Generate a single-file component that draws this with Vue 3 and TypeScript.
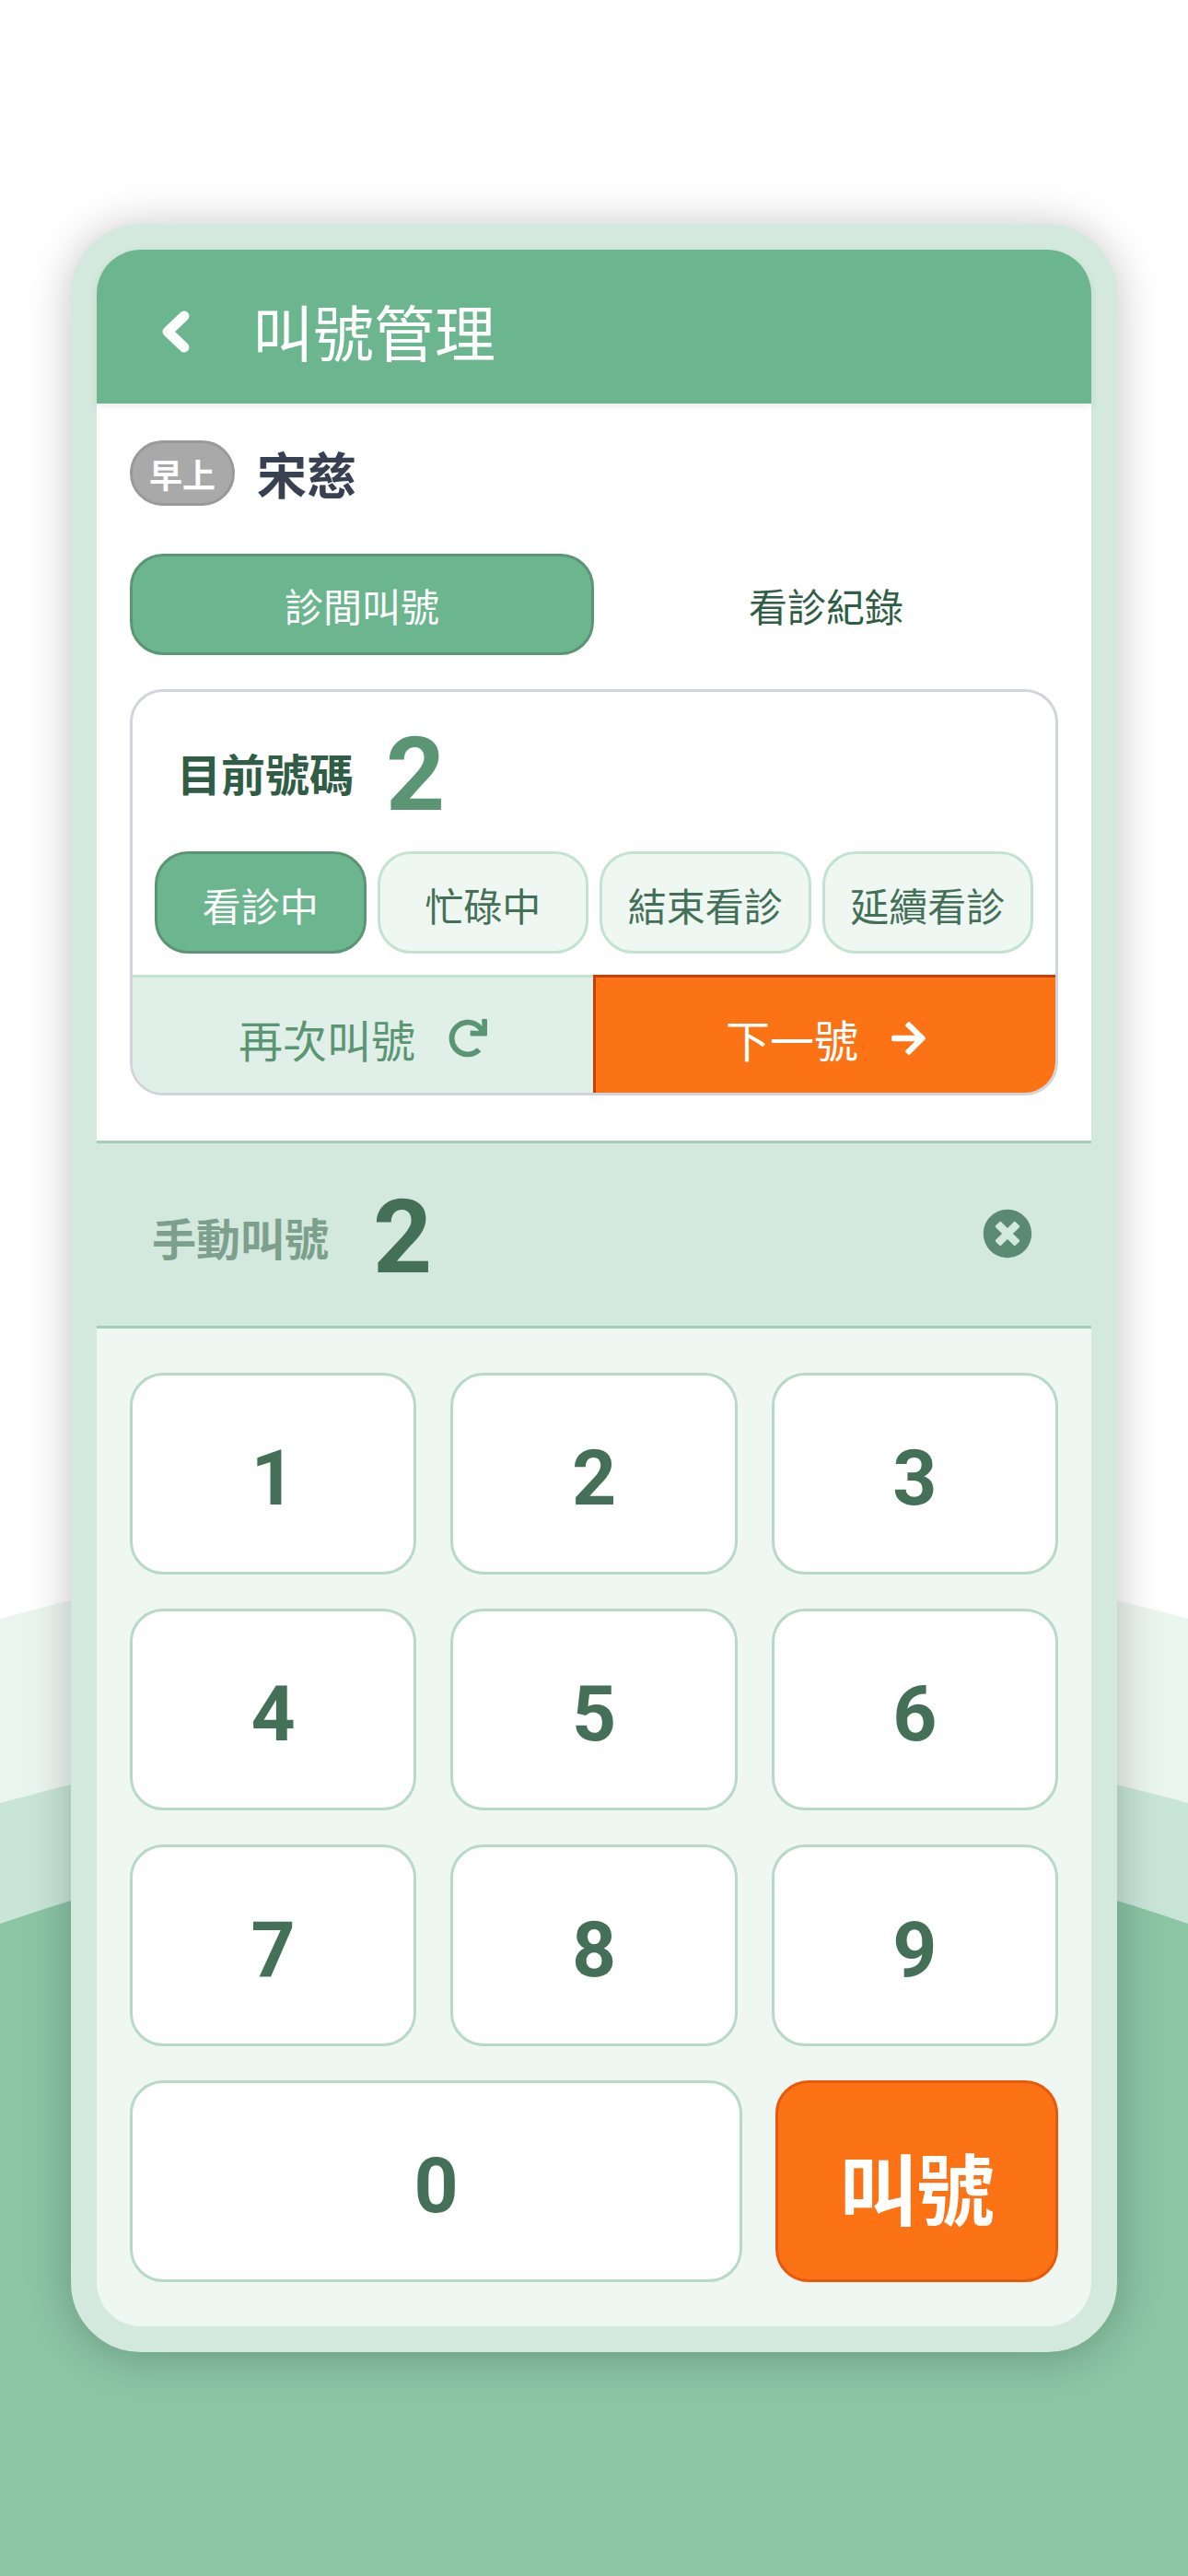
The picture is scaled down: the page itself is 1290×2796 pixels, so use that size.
<script setup lang="ts">
import { computed, ref } from 'vue'

interface Status {
  label: string
  active: boolean
}

const statuses: Status[] = [
  { label: '看診中', active: true },
  { label: '忙碌中', active: false },
  { label: '結束看診', active: false },
  { label: '延續看診', active: false },
]

const digits: string[] = ['1', '2', '3', '4', '5', '6', '7', '8', '9']
const currentNumber = ref<number>(2)
const manualNumber = computed<string>(() => String(currentNumber.value))
</script>

<template>
  <main class="page">
    <svg class="waves" viewBox="0 0 1290 2796" aria-hidden="true">
      <path fill="#ebf5f0" d="M0 1757Q645 1579 1290 1757V2796H0Z" />
      <path fill="#c8e5d8" d="M0 1957Q645 1779 1290 1957V2796H0Z" />
      <path fill="#8ac5a4" d="M0 2088Q645 1865 1290 2088V2796H0Z" />
    </svg>

    <section class="frame">
      <header class="topbar">
        <svg class="back" viewBox="0 0 36 56" aria-hidden="true">
          <path fill="none" stroke="currentColor" stroke-width="11" stroke-linecap="round" stroke-linejoin="round" d="M27 11L9 28L27 45" />
        </svg>
        <h1 class="title">叫號管理</h1>
      </header>

      <div class="content">
        <div class="doctor">
          <span class="badge">早上</span>
          <span class="name">宋慈</span>
        </div>

        <div class="tabs">
          <button class="tab tab-on">診間叫號</button>
          <button class="tab">看診紀錄</button>
        </div>

        <div class="card">
          <div class="now">
            <span class="now-label">目前號碼</span>
            <span class="now-value">{{ currentNumber }}</span>
          </div>
          <div class="statuses">
            <button
              v-for="s in statuses"
              :key="s.label"
              class="status"
              :class="{ 'status-on': s.active }"
            >{{ s.label }}</button>
          </div>
          <div class="actions">
            <button class="action again">
              <span>再次叫號</span>
              <svg class="again-icon" viewBox="0 0 512 512" aria-hidden="true">
                <path fill="currentColor" d="M500.33 0h-47.41a12 12 0 0 0-12 12.57l4 82.76A247.42 247.42 0 0 0 256 8C119.34 8 8.05 119.53 8 256.19 8 393 119.1 504 256 504a247.1 247.1 0 0 0 166.18-63.91 12 12 0 0 0 .48-17.43l-34-34a12 12 0 0 0-16.38-.55A176 176 0 1 1 402.1 157.8l-101.53-4.87a12 12 0 0 0-12.57 12v47.41a12 12 0 0 0 12 12h200.33a12 12 0 0 0 12-12V12a12 12 0 0 0-12-12z" />
              </svg>
            </button>
            <button class="action next">
              <span>下一號</span>
              <svg class="next-icon" viewBox="0 0 448 512" aria-hidden="true">
                <path fill="currentColor" d="M190.5 66.9l22.2-22.2c9.4-9.4 24.6-9.4 33.9 0L441 239c9.4 9.4 9.4 24.6 0 33.9L246.6 467.3c-9.4 9.4-24.6 9.4-33.9 0l-22.2-22.2c-9.5-9.5-9.3-25 .4-34.3L311.4 296H24c-13.3 0-24-10.7-24-24v-32c0-13.3 10.7-24 24-24h287.4L190.9 101.2c-9.8-9.3-10-24.8-.4-34.3z" />
              </svg>
            </button>
          </div>
        </div>
      </div>

      <div class="manual">
        <span class="manual-label">手動叫號</span>
        <span class="manual-value">{{ manualNumber }}</span>
        <svg class="clear" viewBox="0 0 512 512" aria-hidden="true">
          <path fill="currentColor" d="M256 8C119 8 8 119 8 256s111 248 248 248 248-111 248-248S393 8 256 8zm121.6 313.1c4.7 4.7 4.7 12.3 0 17L338 377.6c-4.7 4.7-12.3 4.7-17 0L256 312l-65.1 65.6c-4.7 4.7-12.3 4.7-17 0L134.4 338c-4.7-4.7-4.7-12.3 0-17l65.6-65-65.6-65.1c-4.7-4.7-4.7-12.3 0-17l39.6-39.6c4.7-4.7 12.3-4.7 17 0l65 65.7 65.1-65.6c4.7-4.7 12.3-4.7 17 0l39.6 39.6c4.7 4.7 4.7 12.3 0 17L312 256l65.6 65.1z" />
        </svg>
      </div>

      <div class="keypad">
        <button v-for="d in digits" :key="d" class="key">{{ d }}</button>
        <div class="last-row">
          <button class="key key-zero">0</button>
          <button class="key key-call">叫號</button>
        </div>
      </div>
    </section>
  </main>
</template>

<style scoped>
.page {
  position: relative;
  box-sizing: border-box;
  width: 1290px;
  height: 2796px;
  padding-top: 243px;
  display: flex;
  justify-content: center;
  align-items: flex-start;
  overflow: hidden;
  background: #ffffff;
  font-family: "Noto Sans CJK TC", "Noto Sans", sans-serif;
}

.waves {
  position: absolute;
  inset: 0;
  width: 1290px;
  height: 2796px;
}

.frame {
  position: relative;
  box-sizing: border-box;
  width: 1136px;
  height: 2310px;
  border: 28px solid #d4e9de;
  border-radius: 76px;
  background: #d4e9de;
  box-shadow: 0 3px 48px rgba(0, 0, 0, 0.24);
  display: flex;
  flex-direction: column;
}

button {
  margin: 0;
  padding: 0;
  font-family: inherit;
  cursor: pointer;
}

.topbar {
  position: relative;
  z-index: 1;
  box-sizing: border-box;
  height: 167px;
  padding: 6px 0 0 68px;
  display: flex;
  align-items: center;
  gap: 65px;
  background: #6bb58f;
  color: #ffffff;
  border-radius: 48px 48px 0 0;
  box-shadow: 0 3px 9px rgba(0, 0, 0, 0.08);
}

.back {
  width: 36px;
  height: 56px;
  margin-top: 5px;
}

.title {
  margin: 0;
  font-size: 66px;
  font-weight: 400;
  line-height: 1;
}

.content {
  box-sizing: border-box;
  height: 800px;
  padding: 40px 36px 0;
  background: #ffffff;
}

.doctor {
  height: 71px;
  display: flex;
  align-items: center;
  gap: 24px;
}

.badge {
  box-sizing: border-box;
  width: 114px;
  height: 71px;
  display: flex;
  align-items: center;
  justify-content: center;
  border: 3px solid #999999;
  border-radius: 36px;
  background: #a9a9a9;
  color: #ffffff;
  font-size: 36px;
  font-weight: 700;
}

.name {
  font-size: 54px;
  font-weight: 700;
  color: #374151;
}

.tabs {
  margin-top: 52px;
  display: flex;
}

.tab {
  box-sizing: border-box;
  flex: 1;
  height: 110px;
  border: 3px solid transparent;
  border-radius: 36px;
  background: transparent;
  color: #2f5d45;
  font-size: 42px;
}

.tab-on {
  border-color: #5a9673;
  background: #6bb58f;
  color: #ffffff;
}

.card {
  box-sizing: border-box;
  margin-top: 37px;
  height: 441px;
  border: 3px solid #d1d5db;
  border-radius: 36px;
  overflow: hidden;
  display: flex;
  flex-direction: column;
}

.now {
  height: 173px;
  padding-left: 48px;
  display: flex;
  align-items: center;
  gap: 35px;
}

.now-label {
  font-size: 48px;
  font-weight: 700;
  color: #2f5d45;
}

.now-value {
  margin-top: 6px;
  font-family: Roboto, sans-serif;
  font-size: 112px;
  font-weight: 700;
  line-height: 1;
  color: #5a9673;
}

.statuses {
  padding: 0 24px;
  display: grid;
  grid-template-columns: repeat(4, 1fr);
  gap: 12px;
}

.status {
  box-sizing: border-box;
  height: 111px;
  padding-top: 3px;
  border: 3px solid #c2e2d2;
  border-radius: 36px;
  background: #eef7f2;
  color: #447057;
  font-size: 42px;
}

.status-on {
  border-color: #5a9673;
  background: #6bb58f;
  color: #ffffff;
}

.actions {
  margin-top: 23px;
  flex: 1;
  display: flex;
}

.action {
  box-sizing: border-box;
  padding-top: 6px;
  border: 0;
  border-top: 3px solid #c2e2d2;
  display: flex;
  align-items: center;
  justify-content: center;
  gap: 36px;
  font-size: 48px;
}

.again {
  flex: 0 0 500px;
  background: #e0efe7;
  color: #5a9673;
}

.again-icon {
  width: 42px;
  height: 42px;
}

.next {
  flex: 1;
  border-top-color: #c2410c;
  border-left: 3px solid #c2410c;
  background: #fc7316;
  color: #ffffff;
}

.next-icon {
  width: 37px;
  height: 42px;
}

.manual {
  box-sizing: border-box;
  height: 204px;
  padding: 4px 64px 0 60px;
  display: flex;
  align-items: center;
  gap: 48px;
  border-top: 3px solid #a6cdb8;
  border-bottom: 3px solid #a6cdb8;
  background: #d4e9de;
}

.manual-label {
  font-size: 48px;
  font-weight: 700;
  color: #447057;
  opacity: 0.6;
}

.manual-value {
  margin-top: 2px;
  font-family: Roboto, sans-serif;
  font-size: 112px;
  font-weight: 700;
  line-height: 1;
  color: #447057;
}

.clear {
  width: 54px;
  height: 54px;
  margin-left: auto;
  margin-bottom: 6px;
  color: #5a8a72;
}

.keypad {
  box-sizing: border-box;
  flex: 1;
  padding: 48px 36px 47px;
  display: grid;
  grid-template-columns: repeat(3, 1fr);
  grid-auto-rows: 219px;
  gap: 37px;
  background: #eef7f2;
  border-radius: 0 0 48px 48px;
}

.key {
  box-sizing: border-box;
  padding-top: 9px;
  border: 3px solid #b9d8c8;
  border-radius: 36px;
  background: #ffffff;
  color: #447057;
  font-family: Roboto, "Noto Sans CJK TC", sans-serif;
  font-size: 84px;
  font-weight: 700;
}

.last-row {
  grid-column: 1 / -1;
  display: flex;
  gap: 36px;
}

.key-zero {
  width: 665px;
}

.key-call {
  flex: 1;
  border-color: #ea580c;
  background: #fc7316;
  color: #ffffff;
}
</style>
